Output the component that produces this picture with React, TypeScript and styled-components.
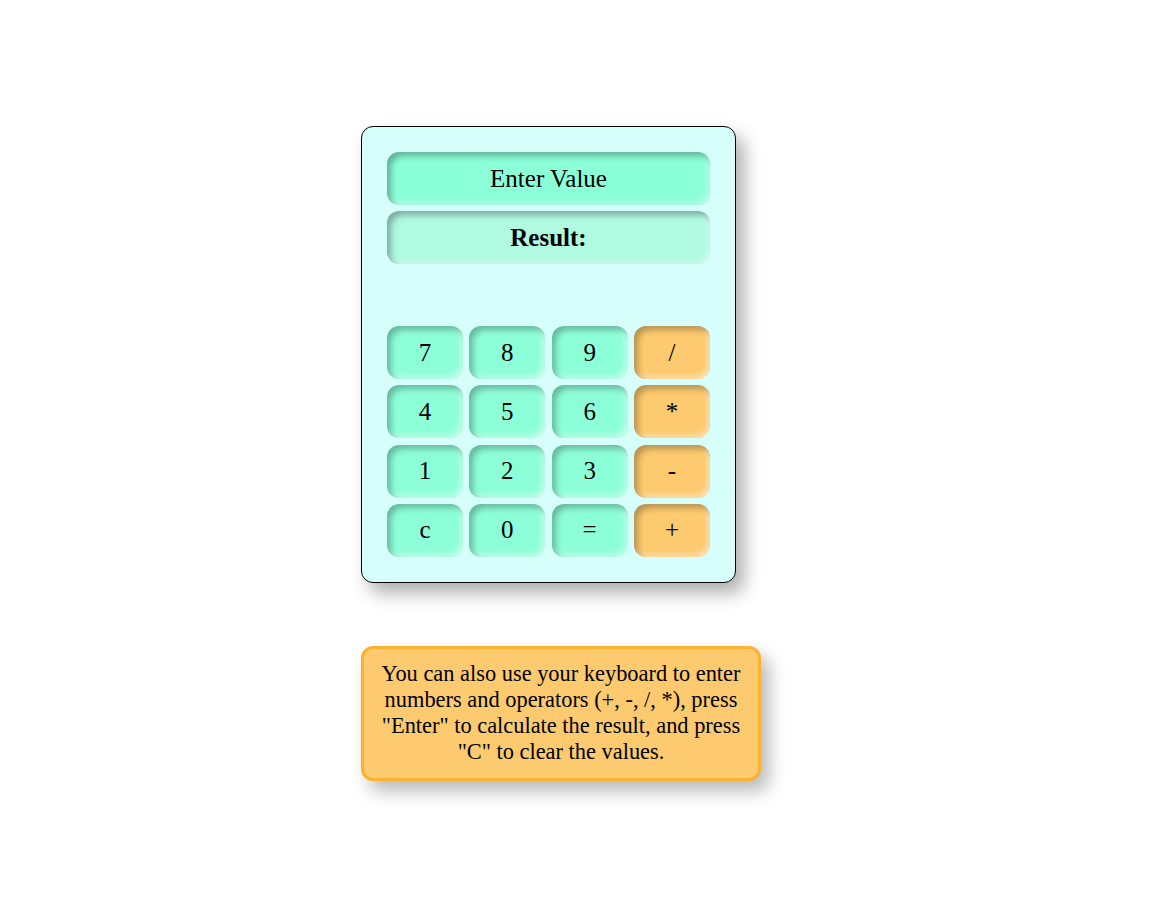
import React from "react";
import styled, { createGlobalStyle } from "styled-components";

const Global = createGlobalStyle`
  html, body { margin: 0; padding: 0; background: #ffffff; }
  body { font-family: "Liberation Serif", "Times New Roman", serif; color: #000; }
`;

const Page = styled.main`
  display: flex;
  flex-direction: column;
  align-items: flex-start;
  gap: 63px;
  min-height: 100vh;
  box-sizing: border-box;
  padding: 126px 0 60px 361px;
`;

const Card = styled.section`
  box-sizing: border-box;
  width: 375px;
  height: 457px;
  padding: 25px;
  background: #d6fffc;
  border: 1px solid #000;
  border-radius: 12px;
  box-shadow: 8px 10px 18px rgba(0, 0, 0, 0.32);
  display: flex;
  flex-direction: column;
`;

const Display = styled.div<{ $bg: string; $bold?: boolean }>`
  box-sizing: border-box;
  height: 53px;
  border-radius: 12px;
  background: ${(p) => p.$bg};
  box-shadow: inset 4px 4px 6px rgba(0, 0, 0, 0.3),
    inset -3px -3px 5px rgba(255, 255, 255, 0.35);
  display: flex;
  align-items: center;
  justify-content: center;
  font-size: 25px;
  font-weight: ${(p) => (p.$bold ? 700 : 400)};
  & + & { margin-top: 6px; }
`;

const Keys = styled.div`
  margin-top: 62px;
  display: grid;
  grid-template-columns: repeat(4, 76px);
  grid-auto-rows: 53px;
  column-gap: 6.33px;
  row-gap: 6.33px;
`;

const Key = styled.button<{ $op?: boolean }>`
  border: none;
  border-radius: 12px;
  background: ${(p) => (p.$op ? "#fdca6f" : "#8dffd8")};
  box-shadow: inset 4px 4px 6px rgba(0, 0, 0, 0.28),
    inset -3px -3px 5px rgba(255, 255, 255, 0.45);
  font-family: "Liberation Serif", "Times New Roman", serif;
  font-size: 25px;
  color: #000;
  padding: 0;
  display: flex;
  align-items: center;
  justify-content: center;
`;

const Info = styled.p`
  box-sizing: border-box;
  margin: 0;
  width: 400px;
  padding: 12px 10px 13px;
  background: #fdca6f;
  border: 3px solid #fbb22f;
  border-radius: 12px;
  box-shadow: 8px 10px 18px rgba(0, 0, 0, 0.28);
  text-align: center;
  font-size: 22.4px;
  line-height: 26px;
`;

const keys: { label: string; op?: boolean }[] = [
  { label: "7" }, { label: "8" }, { label: "9" }, { label: "/", op: true },
  { label: "4" }, { label: "5" }, { label: "6" }, { label: "*", op: true },
  { label: "1" }, { label: "2" }, { label: "3" }, { label: "-", op: true },
  { label: "c" }, { label: "0" }, { label: "=" }, { label: "+", op: true },
];

export default function App() {
  return (
    <>
      <Global />
      <Page>
        <Card>
          <Display $bg="#8bffd8">Enter Value</Display>
          <Display $bg="#b0fae2" $bold>Result:</Display>
          <Keys>
            {keys.map((k) => (
              <Key key={k.label} $op={k.op}>{k.label}</Key>
            ))}
          </Keys>
        </Card>
        <Info>
          You can also use your keyboard to enter numbers and operators (+, -, /, *), press "Enter" to calculate the result, and press "C" to clear the values.
        </Info>
      </Page>
    </>
  );
}
